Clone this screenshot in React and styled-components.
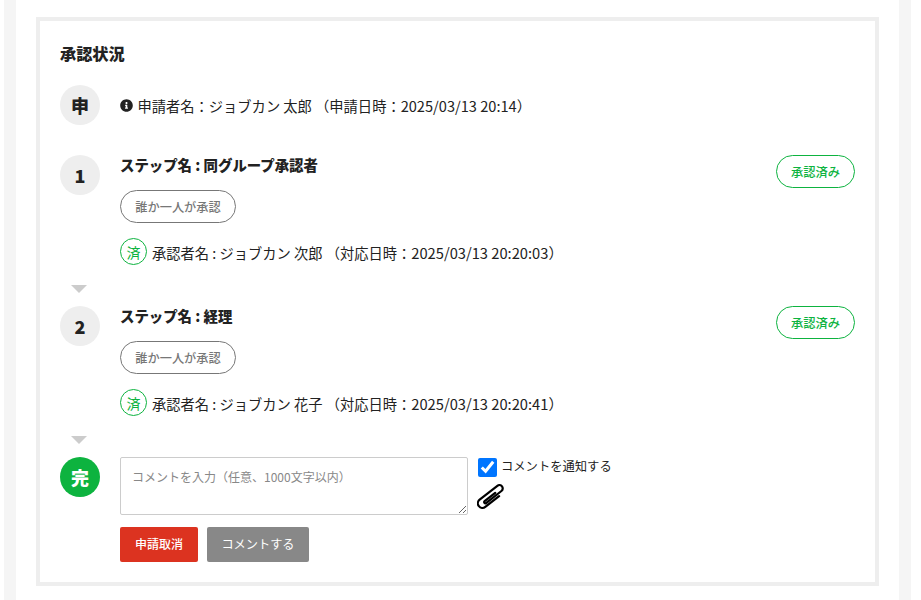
import React from 'react'
import styled, { createGlobalStyle } from 'styled-components'
import { FaInfoCircle } from 'react-icons/fa'

const GlobalStyle = createGlobalStyle`
  html, body { margin: 0; padding: 0; background: #fff; }
  body {
    font-family: "Noto Sans CJK JP", "Noto Sans", sans-serif;
    color: #222;
    overflow: hidden;
  }
  * { box-sizing: border-box; }
`

const Page = styled.div`
  width: 907px;
  height: 600px;
  margin-left: 4px;
  border-left: 12px solid #f5f5f5;
  border-right: 12px solid #f5f5f5;
  padding: 17px 20px 0;
`

const Panel = styled.section`
  width: 843px;
  height: 569px;
  border: 4px solid #eeeeee;
  padding: 21px 20px 0;
`

const Title = styled.h2`
  margin: 0 0 21px;
  font-size: 16.2px;
  font-weight: 900;
  line-height: 22px;
`

const Step = styled.div`
  display: flex;
  min-height: ${p => p.$height}px;
  position: relative;
`

const Badge = styled.div`
  flex: none;
  width: 40px;
  height: 40px;
  margin-right: 20px;
  border-radius: 50%;
  display: flex;
  align-items: center;
  justify-content: center;
  font-size: 18px;
  font-weight: 900;
  background: ${p => (p.$done ? '#0db33f' : '#eeeeee')};
  color: ${p => (p.$done ? '#fff' : '#222')};
`

const Body = styled.div`
  flex: 1;
`

const ApplicantLine = styled.div`
  display: flex;
  align-items: center;
  height: 40px;
  font-size: 14.27px;
  white-space: pre;
  svg { width: 13px; height: 13px; margin: 0 5px 0 -0.5px; }
`

const Stamp = styled.span`
  font-size: ${p => p.$size}px;
`

const StepHead = styled.div`
  display: flex;
  justify-content: space-between;
  align-items: flex-start;
`

const StepName = styled.div`
  font-size: 14.4px;
  font-weight: 900;
  line-height: 22px;
  margin-top: -1px;
`

const StatusPill = styled.div`
  width: 79px;
  height: 33px;
  border: 1px solid #0db33f;
  border-radius: 17px;
  color: #0db33f;
  font-size: 12.3px;
  font-weight: 500;
  display: flex;
  align-items: center;
  justify-content: center;
`

const RulePill = styled.div`
  width: 116px;
  height: 33px;
  margin-top: 2px;
  border: 1px solid #777;
  border-radius: 17px;
  color: #777;
  font-size: 12.2px;
  font-weight: 500;
  display: flex;
  align-items: center;
  justify-content: center;
`

const Approver = styled.div`
  display: flex;
  align-items: center;
  margin-top: 15px;
  font-size: 14.27px;
  white-space: pre;
`

const ApproverText = styled.span`
  padding-top: 2px;
`

const Done = styled.span`
  width: 27px;
  height: 27px;
  margin-right: 5px;
  border: 1px solid #0db33f;
  border-radius: 50%;
  color: #0db33f;
  font-size: 14px;
  font-weight: 400;
  display: flex;
  align-items: center;
  justify-content: center;
`

const Arrow = styled.div`
  width: 0;
  height: 0;
  margin: 0 0 13px 11px;
  border-left: 8px solid transparent;
  border-right: 8px solid transparent;
  border-top: 8px solid #cccccc;
`

const CommentRow = styled.div`
  display: flex;
`

const CommentBox = styled.textarea`
  width: 348px;
  height: 58px;
  padding: 9px 11px;
  border: 1px solid #ccc;
  border-radius: 2px;
  font-family: inherit;
  font-size: 12px;
  line-height: 20px;
  color: #222;
  &::placeholder { color: #888; opacity: 1; }
`

const Side = styled.div`
  margin-left: 10px;
`

const Notify = styled.label`
  display: flex;
  align-items: center;
  height: 20px;
  margin-top: -1px;
  font-size: 12.3px;
  input {
    width: 19px;
    height: 19px;
    margin: 3px 4px 0 0;
    accent-color: #0075ff;
  }
`

const ClipIcon = styled.svg`
  display: block;
  width: 27px;
  height: 25px;
  margin: 8px 0 0 -1px;
`

const Actions = styled.div`
  display: flex;
  gap: 9px;
  margin-top: 12px;
`

const Button = styled.button`
  height: 35px;
  width: ${p => p.$width}px;
  padding: 0 0 2px;
  border: 0;
  border-radius: 2px;
  background: ${p => p.$bg};
  color: #fff;
  font-family: inherit;
  font-size: ${p => p.$size}px;
  font-weight: ${p => p.$weight};
`

const steps = [
  { no: '1', name: '同グループ承認者', person: '次郎', at: '2025/03/13 20:20:03' },
  { no: '2', name: '経理', person: '花子', at: '2025/03/13 20:20:41' },
]

export default function App() {
  return (
    <>
      <GlobalStyle />
      <Page>
        <Panel>
          <Title>承認状況</Title>
          <Step $height={70}>
            <Badge>申</Badge>
            <Body>
              <ApplicantLine>
                <FaInfoCircle />
                <span>申請者名：ジョブカン 太郎 （申請日時：<Stamp $size={14.6}>2025/03/13 20:14）</Stamp></span>
              </ApplicantLine>
            </Body>
          </Step>
          {steps.map(s => (
            <React.Fragment key={s.no}>
              <Step $height={130}>
                <Badge>{s.no}</Badge>
                <Body>
                  <StepHead>
                    <StepName>ステップ名 : {s.name}</StepName>
                    <StatusPill>承認済み</StatusPill>
                  </StepHead>
                  <RulePill>誰か一人が承認</RulePill>
                  <Approver>
                    <Done>済</Done>
                    <ApproverText>承認者名 : ジョブカン {s.person} （対応日時：<Stamp $size={14.7}>{s.at}）</Stamp></ApproverText>
                  </Approver>
                </Body>
              </Step>
              <Arrow />
            </React.Fragment>
          ))}
          <Step>
            <Badge $done>完</Badge>
            <Body>
              <CommentRow>
                <CommentBox placeholder="コメントを入力（任意、1000文字以内）" />
                <Side>
                  <Notify>
                    <input type="checkbox" defaultChecked />
                    コメントを通知する
                  </Notify>
                  <ClipIcon viewBox="0 0 27 25" fill="none" stroke="#000" strokeWidth="2.2" strokeLinecap="round">
                    <path transform="translate(13.5 12.5) rotate(-38)" d="M7 5H-10.5A4.6 4.6 0 0 1 -10.5 -4.2H12A3.3 3.3 0 0 1 12 2.4H-7.5A1.2 1.2 0 0 1 -7.5 0H6" />
                  </ClipIcon>
                </Side>
              </CommentRow>
              <Actions>
                <Button $width={78} $bg="#dc3320" $size={12} $weight={500}>申請取消</Button>
                <Button $width={102} $bg="#888888" $size={12.2} $weight={400}>コメントする</Button>
              </Actions>
            </Body>
          </Step>
        </Panel>
      </Page>
    </>
  )
}
